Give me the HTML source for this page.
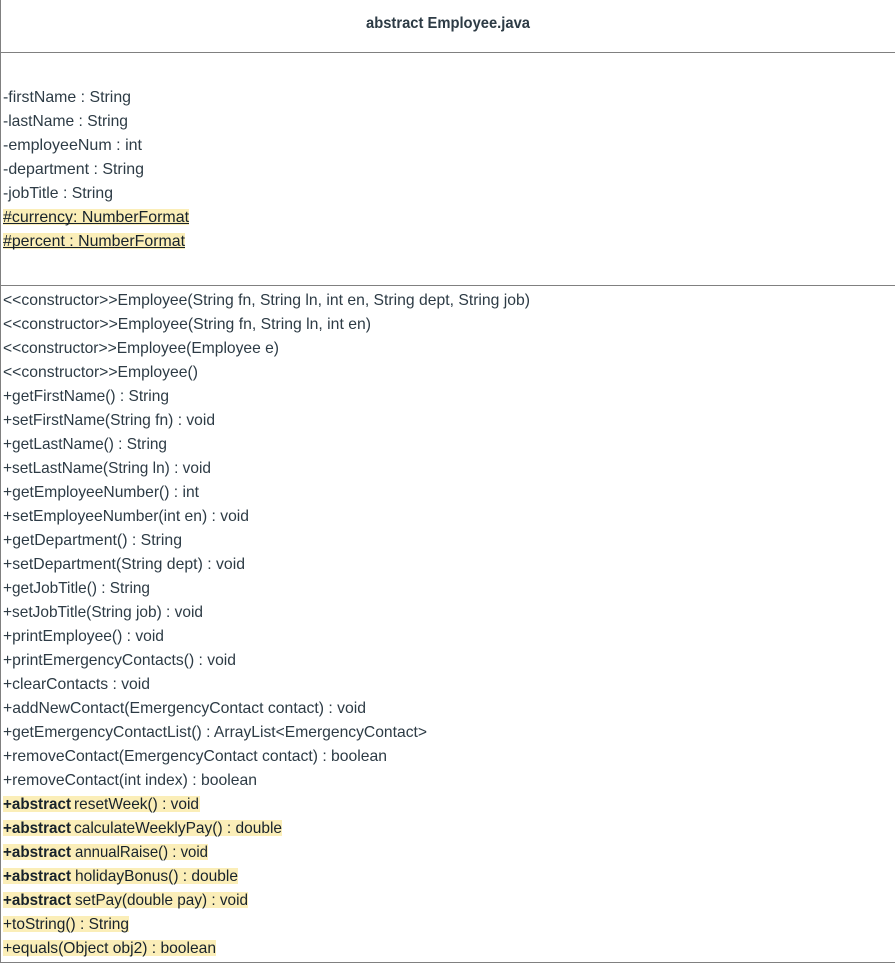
<!DOCTYPE html>
<html>
<head>
<meta charset="utf-8">
<title>abstract Employee.java</title>
<style>
html,body{margin:0;padding:0;background:#fff;width:895px;height:965px;overflow:hidden}
svg{display:block}
text{font-family:"Liberation Sans",sans-serif;font-size:16px;fill:#2d3b45}
.b{font-weight:bold}
.h{fill:#17222b}
.hl{fill:#fbeeb8}
.ln{fill:#808080}
</style>
</head>
<body>
<svg width="895" height="965" viewBox="0 0 895 965" xmlns="http://www.w3.org/2000/svg">
<rect width="895" height="965" fill="#fff"/>
<rect class="ln" x="0" y="0" width="1" height="963"/>
<rect class="ln" x="0" y="52" width="895" height="1"/>
<rect class="ln" x="0" y="285" width="895" height="1"/>
<rect class="ln" x="0" y="962" width="895" height="1"/>

<text class="b" x="366" y="28" textLength="164" lengthAdjust="spacingAndGlyphs">abstract Employee.java</text>

<text x="3" y="102" textLength="128" lengthAdjust="spacingAndGlyphs">-firstName : String</text>
<text x="3" y="126" textLength="125" lengthAdjust="spacingAndGlyphs">-lastName : String</text>
<text x="3" y="150" textLength="139" lengthAdjust="spacingAndGlyphs">-employeeNum : int</text>
<text x="3" y="174" textLength="141" lengthAdjust="spacingAndGlyphs">-department : String</text>
<text x="3" y="198" textLength="110" lengthAdjust="spacingAndGlyphs">-jobTitle : String</text>

<rect class="hl" x="3" y="209" width="186" height="16"/>
<text class="h" x="3" y="222" textLength="186" lengthAdjust="spacingAndGlyphs">#currency: NumberFormat</text>
<rect x="3" y="223" width="186" height="1" fill="#17222b"/>
<rect class="hl" x="3" y="233" width="182" height="16"/>
<text class="h" x="3" y="246" textLength="182" lengthAdjust="spacingAndGlyphs">#percent : NumberFormat</text>
<rect x="3" y="247" width="182" height="1" fill="#17222b"/>

<text x="3" y="305" textLength="527" lengthAdjust="spacingAndGlyphs">&lt;&lt;constructor&gt;&gt;Employee(String fn, String ln, int en, String dept, String job)</text>
<text x="3" y="329" textLength="368" lengthAdjust="spacingAndGlyphs">&lt;&lt;constructor&gt;&gt;Employee(String fn, String ln, int en)</text>
<text x="3" y="353" textLength="276" lengthAdjust="spacingAndGlyphs">&lt;&lt;constructor&gt;&gt;Employee(Employee e)</text>
<text x="3" y="377" textLength="195" lengthAdjust="spacingAndGlyphs">&lt;&lt;constructor&gt;&gt;Employee()</text>
<text x="3" y="401" textLength="166" lengthAdjust="spacingAndGlyphs">+getFirstName() : String</text>
<text x="3" y="425" textLength="212" lengthAdjust="spacingAndGlyphs">+setFirstName(String fn) : void</text>
<text x="3" y="449" textLength="164" lengthAdjust="spacingAndGlyphs">+getLastName() : String</text>
<text x="3" y="473" textLength="208" lengthAdjust="spacingAndGlyphs">+setLastName(String ln) : void</text>
<text x="3" y="497" textLength="196" lengthAdjust="spacingAndGlyphs">+getEmployeeNumber() : int</text>
<text x="3" y="521" textLength="246" lengthAdjust="spacingAndGlyphs">+setEmployeeNumber(int en) : void</text>
<text x="3" y="545" textLength="179" lengthAdjust="spacingAndGlyphs">+getDepartment() : String</text>
<text x="3" y="569" textLength="242" lengthAdjust="spacingAndGlyphs">+setDepartment(String dept) : void</text>
<text x="3" y="593" textLength="147" lengthAdjust="spacingAndGlyphs">+getJobTitle() : String</text>
<text x="3" y="617" textLength="200" lengthAdjust="spacingAndGlyphs">+setJobTitle(String job) : void</text>
<text x="3" y="641" textLength="161" lengthAdjust="spacingAndGlyphs">+printEmployee() : void</text>
<text x="3" y="665" textLength="233" lengthAdjust="spacingAndGlyphs">+printEmergencyContacts() : void</text>
<text x="3" y="689" textLength="147" lengthAdjust="spacingAndGlyphs">+clearContacts : void</text>
<text x="3" y="713" textLength="363" lengthAdjust="spacingAndGlyphs">+addNewContact(EmergencyContact contact) : void</text>
<text x="3" y="737" textLength="424" lengthAdjust="spacingAndGlyphs">+getEmergencyContactList() : ArrayList&lt;EmergencyContact&gt;</text>
<text x="3" y="761" textLength="384" lengthAdjust="spacingAndGlyphs">+removeContact(EmergencyContact contact) : boolean</text>
<text x="3" y="785" textLength="254" lengthAdjust="spacingAndGlyphs">+removeContact(int index) : boolean</text>

<rect class="hl" x="3" y="796" width="197" height="16"/>
<text class="b h" x="3" y="809" textLength="68" lengthAdjust="spacingAndGlyphs">+abstract</text>
<text class="h" x="74" y="809" textLength="125" lengthAdjust="spacingAndGlyphs">resetWeek() : void</text>

<rect class="hl" x="3" y="820" width="279" height="16"/>
<text class="b h" x="3" y="833" textLength="68" lengthAdjust="spacingAndGlyphs">+abstract</text>
<text class="h" x="74" y="833" textLength="208" lengthAdjust="spacingAndGlyphs">calculateWeeklyPay() : double</text>

<rect class="hl" x="3" y="844" width="205" height="16"/>
<text class="b h" x="3" y="857" textLength="68" lengthAdjust="spacingAndGlyphs">+abstract</text>
<text class="h" x="75" y="857" textLength="133" lengthAdjust="spacingAndGlyphs">annualRaise() : void</text>

<rect class="hl" x="3" y="868" width="235" height="16"/>
<text class="b h" x="3" y="881" textLength="68" lengthAdjust="spacingAndGlyphs">+abstract</text>
<text class="h" x="75" y="881" textLength="163" lengthAdjust="spacingAndGlyphs">holidayBonus() : double</text>

<rect class="hl" x="3" y="892" width="245" height="16"/>
<text class="b h" x="3" y="905" textLength="68" lengthAdjust="spacingAndGlyphs">+abstract</text>
<text class="h" x="75" y="905" textLength="173" lengthAdjust="spacingAndGlyphs">setPay(double pay) : void</text>

<rect class="hl" x="3" y="916" width="126" height="16"/>
<text class="h" x="3" y="929" textLength="126" lengthAdjust="spacingAndGlyphs">+toString() : String</text>

<rect class="hl" x="3" y="940" width="213" height="16"/>
<text class="h" x="3" y="953" textLength="213" lengthAdjust="spacingAndGlyphs">+equals(Object obj2) : boolean</text>
</svg>
</body>
</html>
